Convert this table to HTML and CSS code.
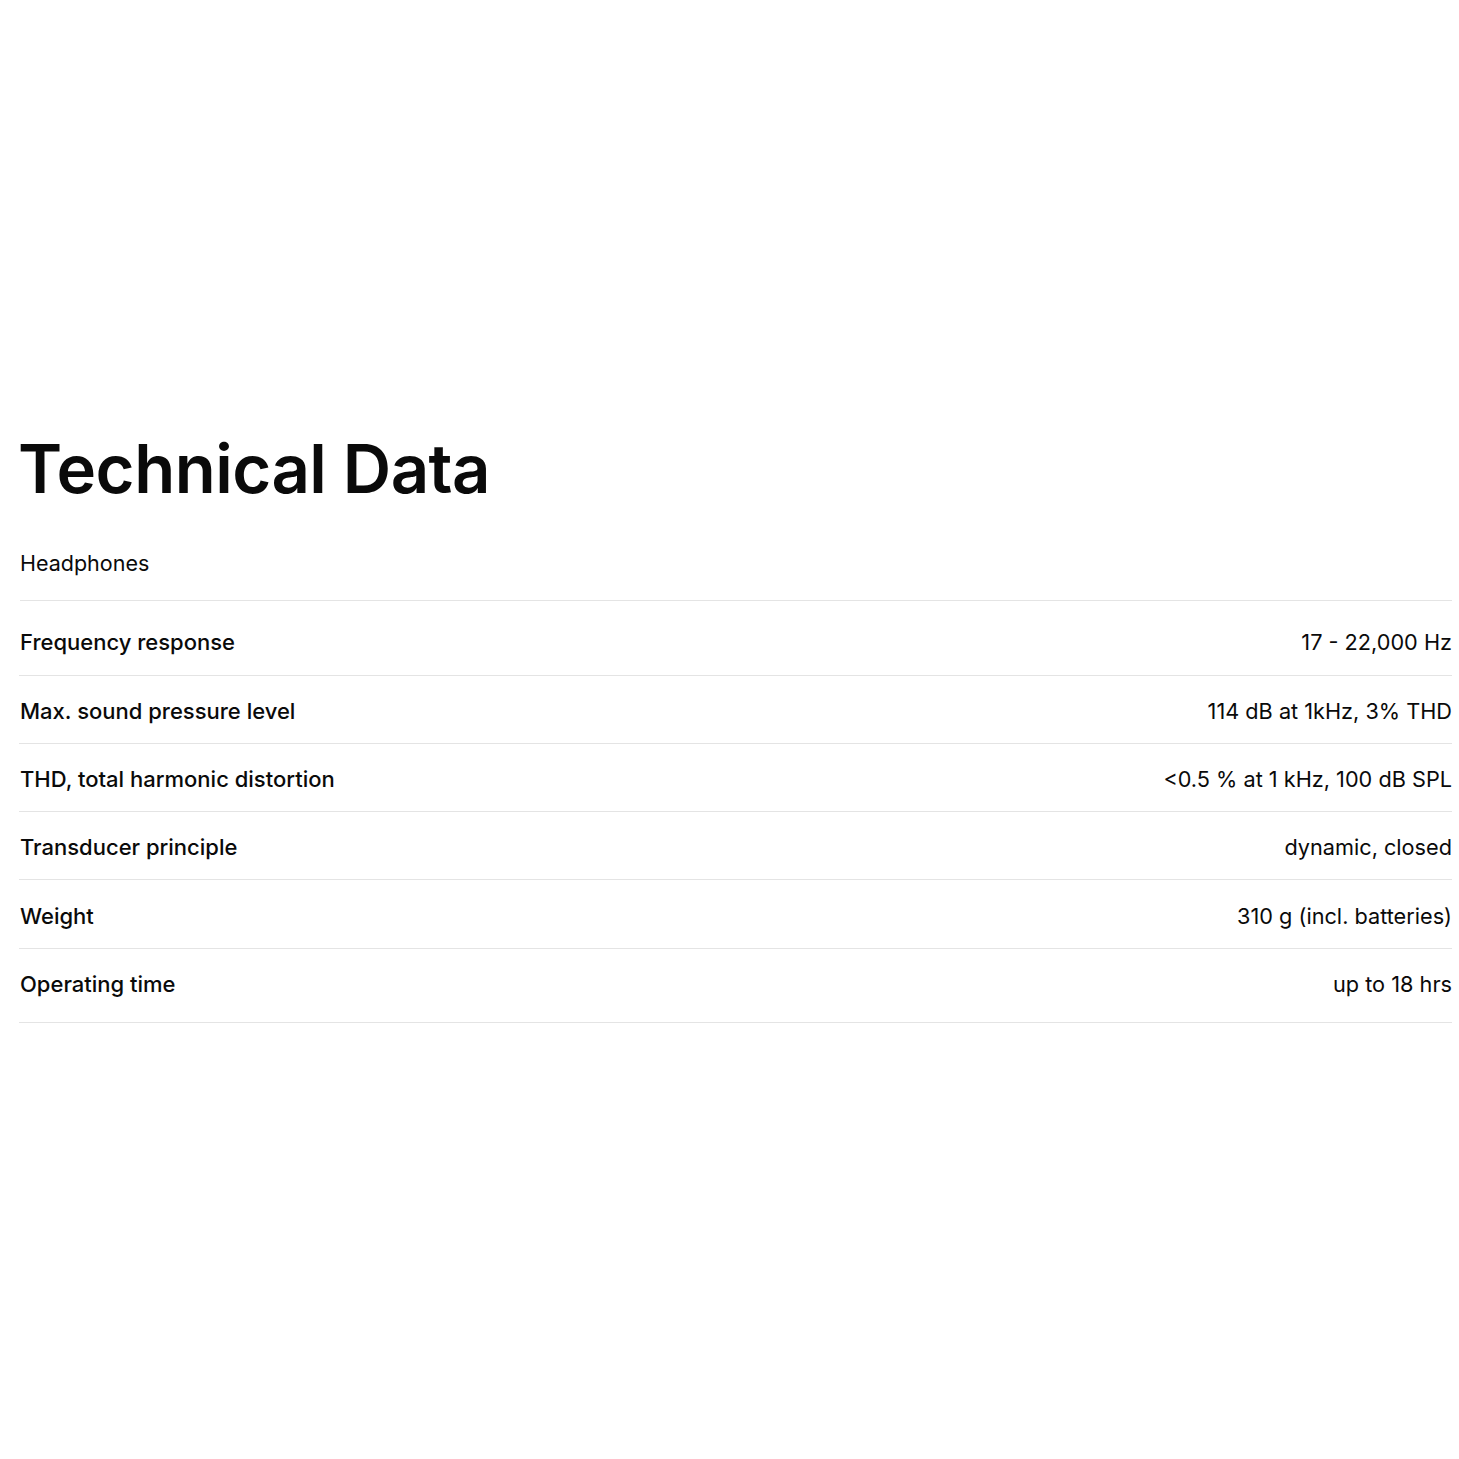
FILE: index.html
```html
<!DOCTYPE html>
<html lang="en">
<head>
<meta charset="utf-8">
<title>Technical Data</title>
<link rel="stylesheet" href="styles.css">
</head>
<body>
<section class="tech">
  <h1 class="tech-title">Technical Data</h1>
  <h2 class="tech-sub">Headphones</h2>
  <dl class="spec-list">
    <div class="spec-row"><dt>Frequency response</dt><dd>17 - 22,000 Hz</dd></div>
    <div class="spec-row"><dt>Max. sound pressure level</dt><dd>114 dB at 1kHz, 3% THD</dd></div>
    <div class="spec-row"><dt>THD, total harmonic distortion</dt><dd>&lt;0.5 % at 1 kHz, 100 dB SPL</dd></div>
    <div class="spec-row"><dt>Transducer principle</dt><dd>dynamic, closed</dd></div>
    <div class="spec-row"><dt>Weight</dt><dd>310 g (incl. batteries)</dd></div>
    <div class="spec-row"><dt>Operating time</dt><dd>up to 18 hrs</dd></div>
  </dl>
</section>
</body>
</html>
```
FILE: styles.css
```css
html, body {
  margin: 0;
  padding: 0;
  background: #fff;
}
body {
  font-family: Inter, "Noto Sans", "Liberation Sans", sans-serif;
  color: #0a0a0a;
}
.tech {
  margin: 0 7px 0 19px;
  padding-top: 424px;
}
.tech-title {
  margin: 0 0 0 -1px;
  font-size: 67px;
  font-weight: 600;
  line-height: 90px;
  letter-spacing: -0.5px;
}
.tech-sub {
  margin: 37px 0 0 1px;
  font-size: 21.5px;
  font-weight: 400;
  line-height: 24px;
  padding-bottom: 25px;
  border-bottom: 1px solid #e4e4e4;
}
.spec-list {
  margin: 0;
}
.spec-row {
  display: flex;
  justify-content: space-between;
  align-items: baseline;
  padding: 22px 0 19px;
  border-bottom: 1px solid #e4e4e4;
  line-height: 26px;
}
.spec-row:first-child {
  padding-top: 28px;
  padding-bottom: 20px;
}
.spec-row:nth-child(5) {
  padding-top: 23px;
}
.spec-row:last-child {
  padding-bottom: 25px;
}
.spec-row dt {
  margin-left: 1px;
  font-size: 22px;
  font-weight: 500;
}
.spec-row dd {
  margin: 0;
  font-size: 21.7px;
  font-weight: 400;
}
```
